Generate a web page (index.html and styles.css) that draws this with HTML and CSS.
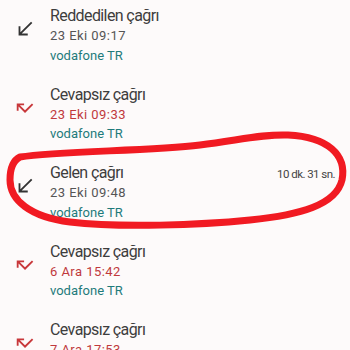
FILE: index.html
```html
<!DOCTYPE html>
<html lang="tr">
<head>
<meta charset="utf-8">
<link rel="stylesheet" href="styles.css">
</head>
<body>
<div class="screen">
  <ul class="calls">
    <li class="call">
      <svg class="icon in" viewBox="0 0 24 24"><path d="M20 5.41L18.59 4 7 15.59V9H5v10h10v-2H8.41z"/></svg>
      <div class="info">
        <div class="title">Reddedilen çağrı</div>
        <div class="date">23 Eki 09:17</div>
        <div class="op">vodafone TR</div>
      </div>
    </li>
    <li class="call">
      <svg class="icon missed" viewBox="0 0 24 24"><path d="M19.59 7L12 14.59 6.41 9H11V7H3v8h2v-4.59l7 7 9-9z"/></svg>
      <div class="info">
        <div class="title">Cevapsız çağrı</div>
        <div class="date red">23 Eki 09:33</div>
        <div class="op">vodafone TR</div>
      </div>
    </li>
    <li class="call">
      <svg class="icon in" viewBox="0 0 24 24"><path d="M20 5.41L18.59 4 7 15.59V9H5v10h10v-2H8.41z"/></svg>
      <div class="info">
        <div class="title-row"><span class="title">Gelen çağrı</span><span class="dur">10 dk. 31 sn.</span></div>
        <div class="date">23 Eki 09:48</div>
        <div class="op">vodafone TR</div>
      </div>
    </li>
    <li class="call">
      <svg class="icon missed" viewBox="0 0 24 24"><path d="M19.59 7L12 14.59 6.41 9H11V7H3v8h2v-4.59l7 7 9-9z"/></svg>
      <div class="info">
        <div class="title">Cevapsız çağrı</div>
        <div class="date red">6 Ara 15:42</div>
        <div class="op">vodafone TR</div>
      </div>
    </li>
    <li class="call">
      <svg class="icon missed" viewBox="0 0 24 24"><path d="M19.59 7L12 14.59 6.41 9H11V7H3v8h2v-4.59l7 7 9-9z"/></svg>
      <div class="info">
        <div class="title">Cevapsız çağrı</div>
        <div class="date red">7 Ara 17:53</div>
        <div class="op">vodafone TR</div>
      </div>
    </li>
  </ul>
  <svg class="scribble" viewBox="0 0 350 350"><path d="M20 157 C 60 151, 150 151, 200 145 C 240 140, 262 134, 288 135 C 328 137, 347 155, 342 180 C 336 205, 300 215, 250 220 C 200 225, 120 228, 70 222 C 30 217, 10 200, 10 180 C 10 168, 14 160, 20 157 Z"/></svg>
</div>
</body>
</html>
```

FILE: styles.css
```css
html, body {
  margin: 0;
  padding: 0;
  background: #fdfafa;
}
body {
  font-family: Roboto, "Noto Sans", sans-serif;
  width: 350px;
  height: 350px;
  overflow: hidden;
}
.screen {
  position: relative;
  width: 350px;
  height: 350px;
  overflow: hidden;
}
.calls {
  list-style: none;
  margin: 0;
  padding: 6px 0 0 0;
}
.call {
  display: flex;
  height: 78.5px;
  box-sizing: border-box;
}
.icon {
  width: 22px;
  height: 22px;
  margin: 12px 0 0 14px;
  flex: none;
}
.icon.in { fill: #333333; }
.icon.missed { fill: #c8373a; }
.info {
  margin-left: 14px;
  flex: 1;
  padding-right: 15px;
}
.title {
  font-size: 16px;
  line-height: 20px;
  letter-spacing: -0.6px;
  color: #3d3d3d;
}
.title-row {
  display: flex;
  justify-content: space-between;
  align-items: baseline;
}
.dur {
  font-size: 11.5px;
  color: #444444;
  letter-spacing: -0.55px;
}
.date {
  font-size: 13px;
  line-height: 19.5px;
  letter-spacing: 0.45px;
  color: #555555;
}
.date.red { color: #c0393c; }
.op {
  font-size: 13px;
  line-height: 19.5px;
  color: #1e7b7b;
}
.scribble {
  position: absolute;
  left: 0;
  top: 0;
  width: 350px;
  height: 350px;
  fill: none;
  stroke: #f11a22;
  stroke-width: 7;
  stroke-linecap: round;
  stroke-linejoin: round;
}
```
